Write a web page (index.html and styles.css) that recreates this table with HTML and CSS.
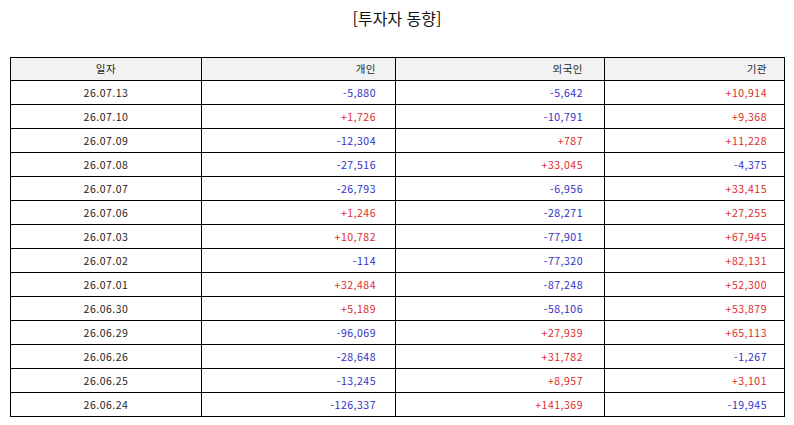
FILE: index.html
```html
<!DOCTYPE html>
<html lang="ko">
<head>
<meta charset="utf-8">
<title>투자자 동향</title>
<link rel="stylesheet" href="styles.css">
</head>
<body>
<div class="page">
  <h1 class="title">[투자자 동향]</h1>
  <table class="grid">
    <colgroup>
      <col class="c-date">
      <col class="c-ind">
      <col class="c-for">
      <col class="c-inst">
    </colgroup>
    <thead>
      <tr><th class="date">일자</th><th class="p-ind">개인</th><th class="p-for">외국인</th><th class="p-inst">기관</th></tr>
    </thead>
    <tbody>
      <tr><td class="date">26.07.13</td><td class="p-ind neg">-5,880</td><td class="p-for neg">-5,642</td><td class="p-inst pos">+10,914</td></tr>
      <tr><td class="date">26.07.10</td><td class="p-ind pos">+1,726</td><td class="p-for neg">-10,791</td><td class="p-inst pos">+9,368</td></tr>
      <tr><td class="date">26.07.09</td><td class="p-ind neg">-12,304</td><td class="p-for pos">+787</td><td class="p-inst pos">+11,228</td></tr>
      <tr><td class="date">26.07.08</td><td class="p-ind neg">-27,516</td><td class="p-for pos">+33,045</td><td class="p-inst neg">-4,375</td></tr>
      <tr><td class="date">26.07.07</td><td class="p-ind neg">-26,793</td><td class="p-for neg">-6,956</td><td class="p-inst pos">+33,415</td></tr>
      <tr><td class="date">26.07.06</td><td class="p-ind pos">+1,246</td><td class="p-for neg">-28,271</td><td class="p-inst pos">+27,255</td></tr>
      <tr><td class="date">26.07.03</td><td class="p-ind pos">+10,782</td><td class="p-for neg">-77,901</td><td class="p-inst pos">+67,945</td></tr>
      <tr><td class="date">26.07.02</td><td class="p-ind neg">-114</td><td class="p-for neg">-77,320</td><td class="p-inst pos">+82,131</td></tr>
      <tr><td class="date">26.07.01</td><td class="p-ind pos">+32,484</td><td class="p-for neg">-87,248</td><td class="p-inst pos">+52,300</td></tr>
      <tr><td class="date">26.06.30</td><td class="p-ind pos">+5,189</td><td class="p-for neg">-58,106</td><td class="p-inst pos">+53,879</td></tr>
      <tr><td class="date">26.06.29</td><td class="p-ind neg">-96,069</td><td class="p-for pos">+27,939</td><td class="p-inst pos">+65,113</td></tr>
      <tr><td class="date">26.06.26</td><td class="p-ind neg">-28,648</td><td class="p-for pos">+31,782</td><td class="p-inst neg">-1,267</td></tr>
      <tr><td class="date">26.06.25</td><td class="p-ind neg">-13,245</td><td class="p-for pos">+8,957</td><td class="p-inst pos">+3,101</td></tr>
      <tr><td class="date">26.06.24</td><td class="p-ind neg">-126,337</td><td class="p-for pos">+141,369</td><td class="p-inst neg">-19,945</td></tr>
    </tbody>
  </table>
</div>
</body>
</html>
```

FILE: styles.css
```css
html, body {
  margin: 0;
  padding: 0;
  background: #ffffff;
}

.page {
  width: 794px;
  height: 425px;
  padding: 0 10px;
  box-sizing: border-box;
  font-family: "Noto Sans CJK KR", "Noto Sans", sans-serif;
  color: #1a1a1a;
}

.title {
  margin: 0;
  padding-top: 7px;
  height: 50px;
  line-height: 22px;
  font-size: 16px;
  font-weight: normal;
  text-align: center;
  color: #111111;
}

.grid {
  width: 774px;
  table-layout: fixed;
  border-collapse: collapse;
  font-size: 10.5px;
  letter-spacing: 0.5px;
}

.c-date { width: 191px; }
.c-ind { width: 194px; }
.c-for { width: 209px; }
.c-inst { width: 180px; }

.grid th,
.grid td {
  border: 1.3px solid #000000;
  padding: 0;
  font-weight: normal;
  white-space: nowrap;
  line-height: 14px;
  color: #262626;
}

.grid thead tr { height: 23px; }
.grid tbody tr { height: 24px; }

.grid thead th { background: #f2f2f2; }

.date { text-align: center; }
.p-ind { text-align: right; padding-right: 19px !important; }
.p-for { text-align: right; padding-right: 21px !important; }
.p-inst { text-align: right; padding-right: 17px !important; }

.grid td.neg { color: #3030c8; }
.grid td.pos { color: #e22a2a; }
```
